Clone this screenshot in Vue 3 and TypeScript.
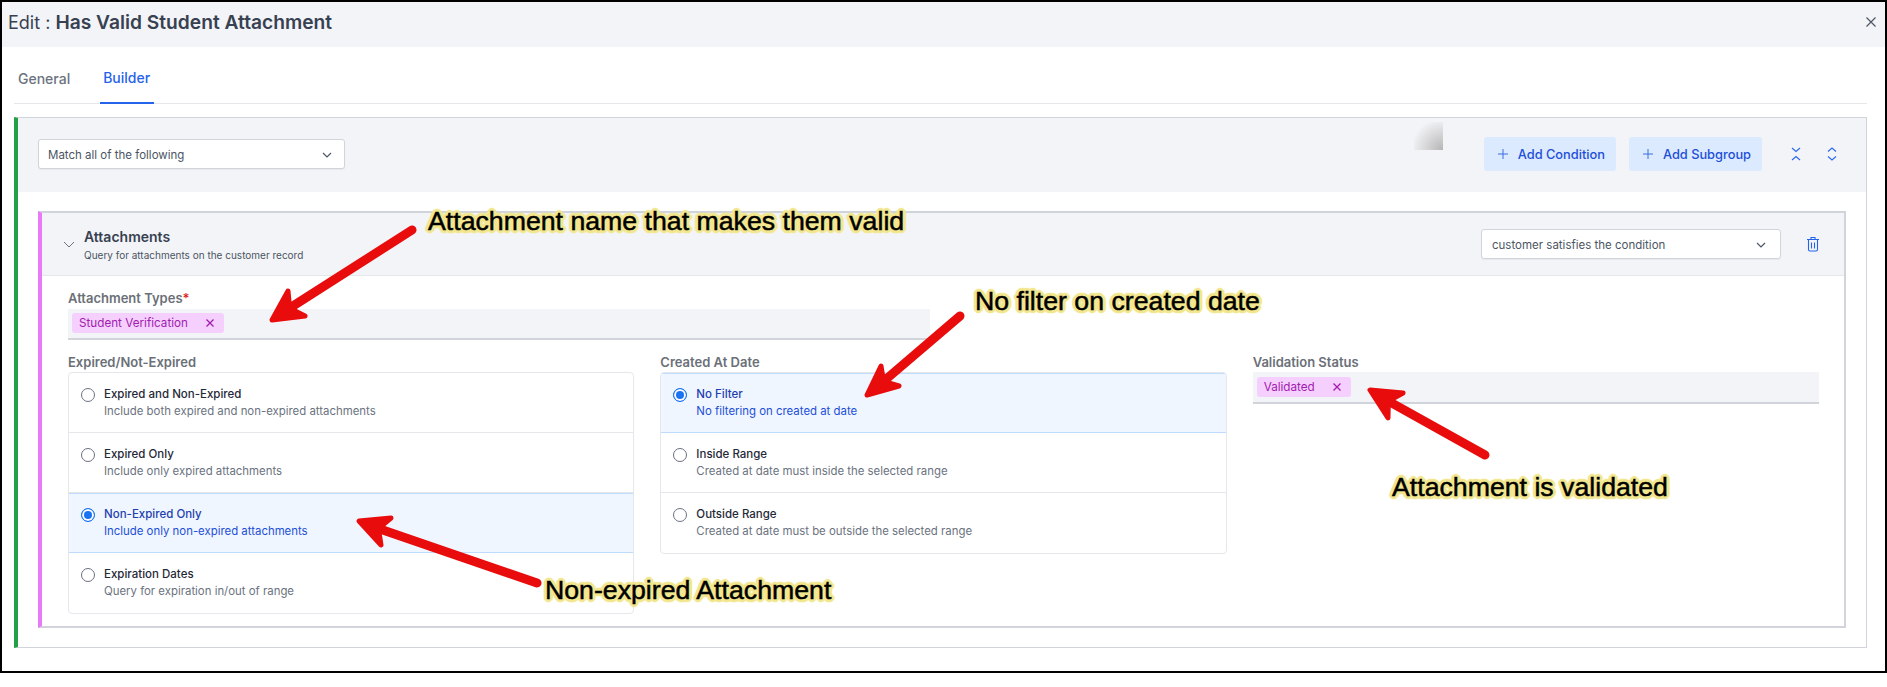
<script setup lang="ts">
interface Option {
  title: string
  desc: string
  on?: boolean
}

type Pt = [number, number]

const expiredOptions: Option[] = [
  { title: 'Expired and Non-Expired', desc: 'Include both expired and non-expired attachments' },
  { title: 'Expired Only', desc: 'Include only expired attachments' },
  { title: 'Non-Expired Only', desc: 'Include only non-expired attachments', on: true },
  { title: 'Expiration Dates', desc: 'Query for expiration in/out of range' }
]

const createdOptions: Option[] = [
  { title: 'No Filter', desc: 'No filtering on created at date', on: true },
  { title: 'Inside Range', desc: 'Created at date must inside the selected range' },
  { title: 'Outside Range', desc: 'Created at date must be outside the selected range' }
]

const radioColumns = [
  { label: 'Expired/Not-Expired', options: expiredOptions },
  { label: 'Created At Date', options: createdOptions }
]

// tail, tip and the two barbs, the notch sits part way back between the barbs
function arrow(tail: Pt, tip: Pt, b1: Pt, b2: Pt) {
  const notch: Pt = [
    tip[0] + ((b1[0] + b2[0]) / 2 - tip[0]) * 0.72,
    tip[1] + ((b1[1] + b2[1]) / 2 - tip[1]) * 0.72
  ]
  return {
    line: `${tail.join(',')} ${notch.join(',')}`,
    head: [tip, b1, notch, b2].map((p) => p.join(',')).join(' ')
  }
}

const arrows = [
  arrow([412, 230], [272, 320], [288, 291], [305, 316]),
  arrow([960, 316], [867, 395], [881, 366], [899, 386]),
  arrow([537, 583], [359, 521], [391, 518], [381, 545]),
  arrow([1485, 455], [1370, 390], [1403, 393], [1388, 418])
]

const notes = [
  { text: 'Attachment name that makes them valid', x: 428, y: 205 },
  { text: 'No filter on created date', x: 975, y: 285 },
  { text: 'Attachment is validated', x: 1392, y: 471 },
  { text: 'Non-expired Attachment', x: 545, y: 574 }
]
</script>

<template>
  <div class="frame">
    <header class="title-bar">
      <h1>Edit : <b>Has Valid Student Attachment</b></h1>
      <svg class="close" viewBox="0 0 12 12" width="12" height="12">
        <path d="M1.5 1.5l9 9M10.5 1.5l-9 9" />
      </svg>
    </header>

    <nav class="tabs">
      <a>General</a>
      <a class="active">Builder</a>
    </nav>

    <section class="group">
      <div class="group-head">
        <div class="select match">
          <span>Match all of the following</span>
          <svg class="caret" viewBox="0 0 10 6" width="10" height="6"><path d="M1 1l4 4 4-4" /></svg>
        </div>
        <div class="smudge"></div>
        <button class="add">
          <svg viewBox="0 0 12 12" width="12" height="12"><path d="M6 1v10M1 6h10" /></svg>
          Add Condition
        </button>
        <button class="add">
          <svg viewBox="0 0 12 12" width="12" height="12"><path d="M6 1v10M1 6h10" /></svg>
          Add Subgroup
        </button>
        <svg class="fold first" viewBox="0 0 10 14" width="10" height="14">
          <path d="M1 1l4 3.5L9 1M1 13l4-3.5L9 13" />
        </svg>
        <svg class="fold" viewBox="0 0 10 14" width="10" height="14">
          <path d="M1 4.5L5 1l4 3.5M1 9.5l4 3.5 4-3.5" />
        </svg>
      </div>

      <div class="group-body">
        <article class="card">
          <div class="card-head">
            <svg class="card-caret" viewBox="0 0 12 7" width="12" height="7"><path d="M1 1l5 5 5-5" /></svg>
            <div class="card-title">
              <h2>Attachments</h2>
              <p>Query for attachments on the customer record</p>
            </div>
            <div class="select scope">
              <span>customer satisfies the condition</span>
              <svg class="caret" viewBox="0 0 10 6" width="10" height="6"><path d="M1 1l4 4 4-4" /></svg>
            </div>
            <svg class="trash" viewBox="0 0 14 16" width="14" height="16">
              <path d="M1 3.5h12M5 3.5V1.5h4v2M2.5 3.5v10a1.5 1.5 0 0 0 1.5 1.5h6a1.5 1.5 0 0 0 1.5-1.5v-10M5.5 6.5v6M8.5 6.5v6" />
            </svg>
          </div>

          <div class="card-body">
            <label class="field-label">Attachment Types<i>*</i></label>
            <div class="tag-field types">
              <span class="chip">
                Student Verification
                <svg viewBox="0 0 10 10" width="10" height="10"><path d="M1.5 1.5l7 7M8.5 1.5l-7 7" /></svg>
              </span>
            </div>

            <div class="columns">
              <div v-for="col in radioColumns" :key="col.label">
                <label class="field-label tall">{{ col.label }}</label>
                <div class="radio-group">
                  <div v-for="opt in col.options" :key="opt.title" class="radio-row" :class="{ on: opt.on }">
                    <span class="radio"></span>
                    <div>
                      <div class="radio-title">{{ opt.title }}</div>
                      <div class="radio-desc">{{ opt.desc }}</div>
                    </div>
                  </div>
                </div>
              </div>
              <div>
                <label class="field-label tall">Validation Status</label>
                <div class="tag-field status">
                  <span class="chip">
                    Validated
                    <svg viewBox="0 0 10 10" width="10" height="10"><path d="M1.5 1.5l7 7M8.5 1.5l-7 7" /></svg>
                  </span>
                </div>
              </div>
            </div>
          </div>
        </article>
      </div>
    </section>

    <svg class="arrows" width="1887" height="687" viewBox="0 0 1887 687">
      <g v-for="a in arrows" :key="a.line">
        <polyline :points="a.line" class="shaft" />
        <polygon :points="a.head" class="head" />
      </g>
    </svg>
    <span v-for="n in notes" :key="n.text" class="note" :style="{ left: n.x + 'px', top: n.y + 'px' }">{{ n.text }}</span>
  </div>
</template>

<style scoped>
.frame {
  position: relative;
  box-sizing: border-box;
  width: 1887px;
  height: 673px;
  border: 2px solid #000;
  background: #fff;
  font-family: Inter, 'Liberation Sans', sans-serif;
  color: #374151;
  overflow: hidden;
}
.title-bar {
  display: flex;
  align-items: center;
  justify-content: space-between;
  height: 45px;
  padding: 0 8px 6px 6px;
  box-sizing: border-box;
  background: #f3f4f7;
}
h1 {
  margin: 0;
  font-size: 18px;
  font-weight: 400;
  color: #374151;
}
h1 b {
  font-size: 19.2px;
  font-weight: 600;
}
.close {
  fill: none;
  stroke: #4b5563;
  stroke-width: 1.2;
}
.tabs {
  display: flex;
  height: 57px;
  margin: 0 18px 0 12px;
  box-sizing: border-box;
  border-bottom: 1px solid #e5e7eb;
  font-size: 14px;
  font-weight: 500;
  color: #6b7280;
}
.tabs a {
  display: flex;
  align-items: center;
  height: 57px;
  box-sizing: border-box;
  padding: 5px 4px 0;
  margin-right: 26px;
}
.tabs .active {
  padding-left: 3px;
  color: #2563eb;
  border-bottom: 2px solid #2563eb;
}
.group {
  margin: 13px 18px 0 12px;
  height: 531px;
  box-sizing: border-box;
  border: 1px solid #d1d5db;
  border-left: 4px solid #22a045;
}
.group-head {
  position: relative;
  display: flex;
  align-items: center;
  height: 74px;
  padding: 0 29px 2px 20px;
  box-sizing: border-box;
  background: #f3f4f7;
}
.select {
  display: flex;
  align-items: center;
  justify-content: space-between;
  height: 30px;
  padding: 1px 14px 0 9px;
  box-sizing: border-box;
  background: #fff;
  border: 1px solid #d1d5db;
  border-radius: 3px;
  box-shadow: 0 1px 1px rgba(0, 0, 0, 0.05);
  font-size: 11.5px;
  color: #4b5563;
}
.match {
  width: 307px;
  margin-right: auto;
  padding-right: 12px;
}
.scope {
  width: 300px;
  margin-left: auto;
  padding-left: 10px;
}
.caret,
.card-caret {
  fill: none;
  stroke: #4b5563;
  stroke-width: 1.2;
}
.card-caret {
  stroke: #6b7280;
  stroke-width: 1;
  margin-right: 9px;
}
.smudge {
  position: absolute;
  left: 1396px;
  top: 4px;
  width: 29px;
  height: 28px;
  background: radial-gradient(circle 32px at 100% 100%, #b5b5b5, rgba(181, 181, 181, 0));
}
.add {
  display: flex;
  align-items: center;
  gap: 9px;
  height: 34px;
  padding: 0 11px 0 13px;
  margin-right: 13px;
  border: 0;
  border-radius: 3px;
  background: #dbeafe;
  font-family: inherit;
  font-size: 12.8px;
  font-weight: 500;
  color: #1d4ed8;
}
.add svg {
  fill: none;
  stroke: #3b6fe0;
  stroke-width: 1;
}
.fold {
  fill: none;
  stroke: #2f6bf0;
  stroke-width: 1.2;
  margin-left: 26px;
}
.fold.first {
  margin-left: 16px;
}
.group-body {
  padding: 19px 20px 0;
}
.card {
  height: 417px;
  box-sizing: border-box;
  border: 2px solid #d1d5db;
  border-left: 4px solid #e879f9;
}
.card-head {
  display: flex;
  align-items: center;
  height: 63px;
  padding: 0 24px 0 21px;
  box-sizing: border-box;
  border-bottom: 1px solid #e5e7eb;
  background: #f3f4f7;
}
h2 {
  margin: 0 0 4px;
  font-size: 14px;
  font-weight: 600;
  color: #374151;
}
.card-title p {
  margin: 0;
  font-size: 10px;
  color: #4b5563;
}
.trash {
  fill: none;
  stroke: #2563eb;
  stroke-width: 1.1;
  margin-left: 25px;
}
.card-body {
  padding: 14px 25px 0 26px;
}
.field-label {
  display: block;
  height: 19px;
  line-height: 16px;
  font-size: 13px;
  font-weight: 600;
  color: #6b7078;
}
.field-label.tall {
  line-height: 18px;
}
.field-label i {
  color: #dc2626;
  font-style: normal;
}
.tag-field {
  display: flex;
  align-items: flex-start;
  height: 31px;
  padding: 4px 4px 0;
  box-sizing: border-box;
  background: #f3f4f7;
  border-bottom: 2px solid #d1d5db;
}
.types {
  width: 862px;
}
.status {
  height: 32px;
  padding-top: 5px;
}
.chip {
  display: flex;
  align-items: center;
  gap: 17px;
  height: 20px;
  padding: 0 9px 0 7px;
  border-radius: 3px;
  background: #f5d0fe;
  font-size: 11.7px;
  color: #a21caf;
}
.chip svg {
  fill: none;
  stroke: #a21caf;
  stroke-width: 1.3;
}
.columns {
  display: grid;
  grid-template-columns: repeat(3, 1fr);
  gap: 26px;
  margin-top: 13px;
}
.radio-group {
  border: 1px solid #e5e7eb;
  border-radius: 4px;
  overflow: hidden;
}
.radio-row {
  display: flex;
  align-items: flex-start;
  gap: 9px;
  height: 60px;
  padding: 13px 14px 0 12px;
  box-sizing: border-box;
  border-bottom: 1px solid #e5e7eb;
}
.radio-row:last-child {
  border-bottom: 0;
}
.radio-row.on {
  background: #eff6ff;
  border-bottom-color: #bfdbfe;
  box-shadow: inset 0 1px 0 #bfdbfe;
}
.radio {
  flex: none;
  width: 14px;
  height: 14px;
  margin-top: 2px;
  box-sizing: border-box;
  border: 1px solid #6b7280;
  border-radius: 50%;
  background: #fff;
}
.on .radio {
  border: 1px solid #1a73f0;
  box-shadow: inset 0 0 0 2px #fff;
  background: #1a73f0;
}
.radio-title {
  font-size: 11.5px;
  line-height: 17px;
  font-weight: 500;
  color: #1f2937;
}
.radio-desc {
  font-size: 11.4px;
  line-height: 16px;
  color: #6b7280;
}
.on .radio-title {
  color: #1e40af;
}
.on .radio-desc {
  color: #1d4ed8;
}
.arrows {
  position: absolute;
  left: -2px;
  top: -2px;
  pointer-events: none;
}
.shaft {
  fill: none;
  stroke: #e90c0c;
  stroke-width: 9;
  stroke-linecap: round;
}
.head {
  fill: #e90c0c;
  stroke: #e90c0c;
  stroke-width: 5;
  stroke-linejoin: round;
}
.note {
  position: absolute;
  margin: -2px 0 0 -2px;
  font-family: 'Liberation Sans', Arial, sans-serif;
  font-size: 26.7px;
  line-height: 32px;
  white-space: nowrap;
  color: #000;
  -webkit-text-stroke: 0.5px #000;
  text-shadow:
    3px 0 1px #f2e68f, -3px 0 1px #f2e68f, 0 3px 1px #f2e68f, 0 -3px 1px #f2e68f,
    2px 2px 1px #f2e68f, -2px 2px 1px #f2e68f, 2px -2px 1px #f2e68f, -2px -2px 1px #f2e68f,
    3px 1px 1px #f2e68f, -3px 1px 1px #f2e68f, 3px -1px 1px #f2e68f, -3px -1px 1px #f2e68f,
    1px 3px 1px #f2e68f, -1px 3px 1px #f2e68f, 1px -3px 1px #f2e68f, -1px -3px 1px #f2e68f;
}
</style>
